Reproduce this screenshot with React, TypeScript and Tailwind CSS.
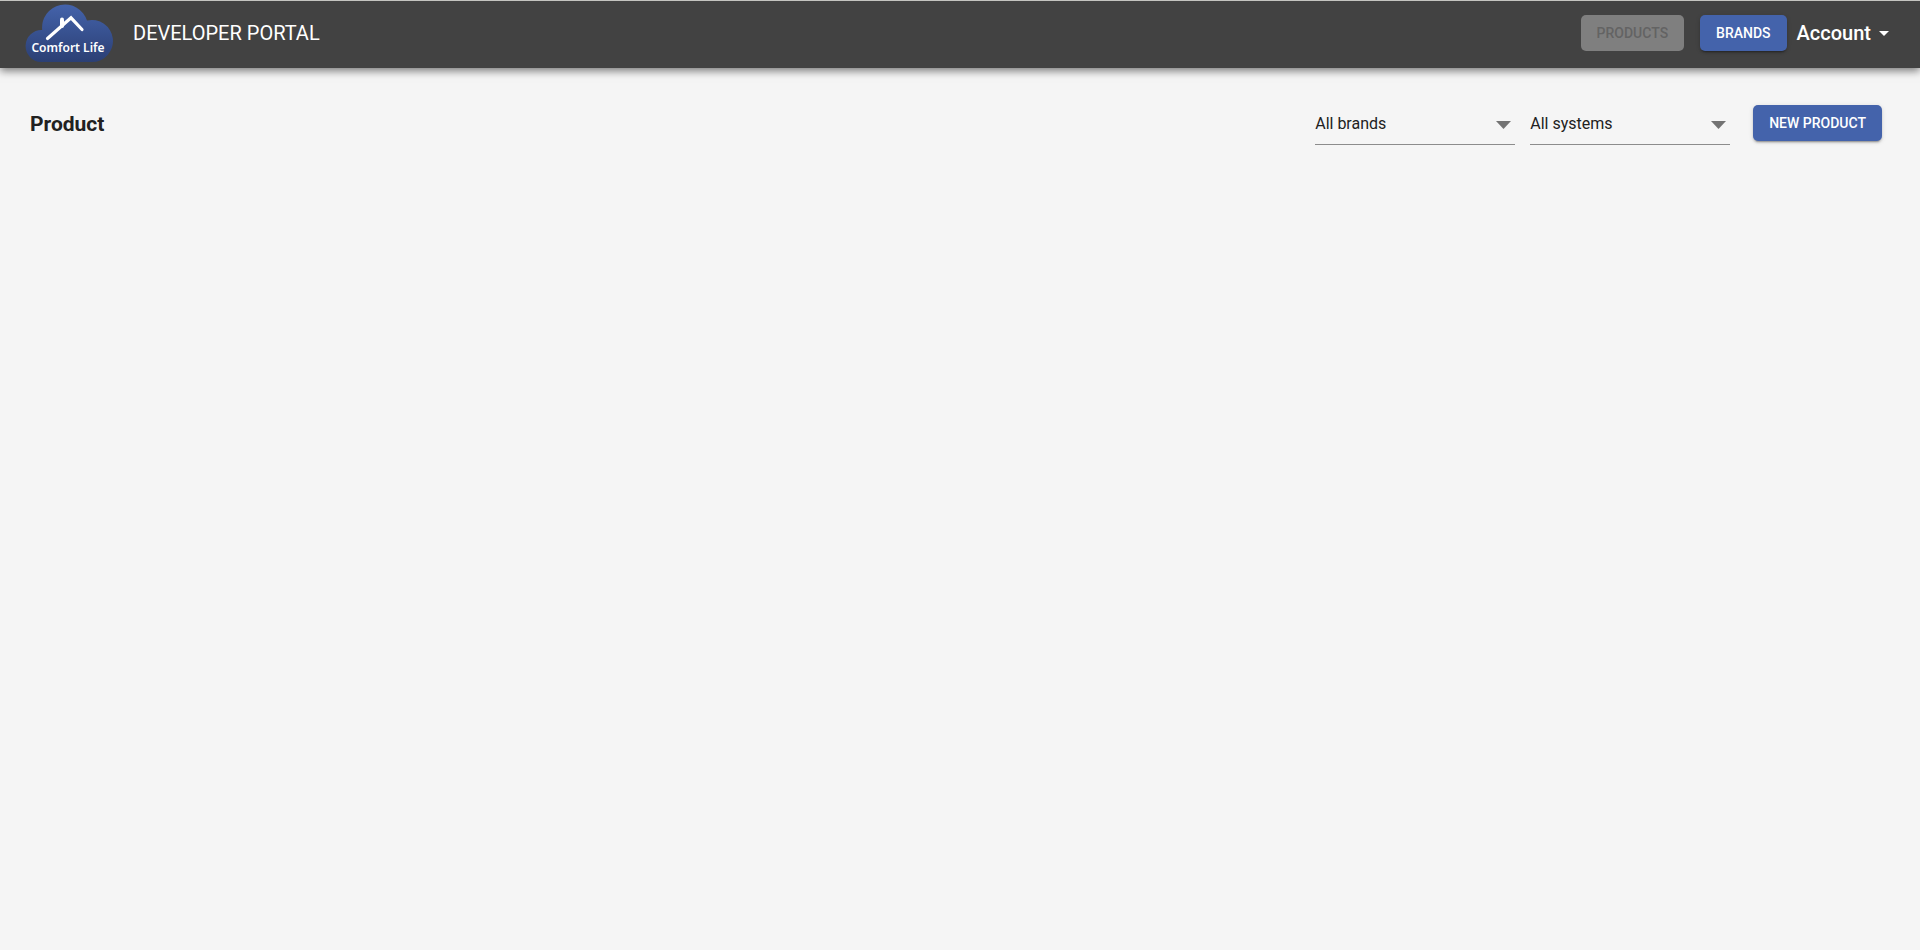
import type { ReactNode } from "react";

function Logo() {
  return (
    <svg
      width="88"
      height="58"
      viewBox="0 0 88 58"
      role="img"
      aria-label="Comfort Life"
    >
      <defs>
        <linearGradient id="cloud" x1="0" y1="0" x2="0" y2="58" gradientUnits="userSpaceOnUse">
          <stop offset="0" stopColor="#4463ab" />
          <stop offset="1" stopColor="#2b3f74" />
        </linearGradient>
      </defs>
      <path
        d="M16 58A16 16 0 1 1 17.2 26A23 23 0 0 1 62 16.6A21 21 0 1 1 67 58Z"
        fill="url(#cloud)"
      />
      <path
        d="M22.5 34.5L46 13.8L57 25.5"
        fill="none"
        stroke="#fff"
        strokeWidth="3.2"
        strokeLinecap="round"
      />
      <path d="M37 15.5V22" fill="none" stroke="#fff" strokeWidth="4" strokeLinecap="round" />
      <text
        x="43"
        y="48"
        textAnchor="middle"
        className="fill-white font-['Noto_Sans',sans-serif] text-[12px] font-semibold"
      >
        Comfort Life
      </text>
    </svg>
  );
}

function Button({ children, disabled = false }: { children: ReactNode; disabled?: boolean }) {
  return (
    <button
      type="button"
      disabled={disabled}
      className="h-9 rounded-[5px] bg-[#4463ab] px-4 text-sm font-medium whitespace-nowrap text-white shadow-[0_3px_1px_-2px_rgba(0,0,0,0.2),0_2px_2px_0_rgba(0,0,0,0.14),0_1px_5px_0_rgba(0,0,0,0.12)] disabled:bg-[#7f7f7f] disabled:text-[#636363] disabled:shadow-none"
    >
      {children}
    </button>
  );
}

function Filter({ label, option }: { label: string; option: string }) {
  return (
    <div className="relative w-50">
      <select
        aria-label={label}
        className="block h-11 w-full appearance-none border-b border-[#8c8c8c] bg-transparent pt-0.5 text-base text-[#212121] outline-none"
      >
        <option>{option}</option>
      </select>
      <svg
        className="pointer-events-none absolute top-5 right-1"
        width="15"
        height="8"
        viewBox="0 0 15 8"
        aria-hidden="true"
      >
        <path d="M0 0H15L7.5 8Z" fill="#737373" />
      </svg>
    </div>
  );
}

export default function App() {
  return (
    <div className="min-h-screen bg-[#f5f5f5] font-[Roboto,sans-serif]">
      <header className="flex items-center border-t border-[#c4c4c0] bg-[#424242] pt-[3px] pr-[31px] pb-1.5 pl-[25px] text-white shadow-[0_3px_8px_0_rgba(0,0,0,0.5)]">
        <Logo />
        <span className="ml-5 text-xl">DEVELOPER PORTAL</span>
        <nav className="ml-auto flex items-center">
          <div className="flex gap-4">
            <Button disabled>PRODUCTS</Button>
            <Button>BRANDS</Button>
          </div>
          <button type="button" className="ml-2.5 flex items-center gap-2 text-xl font-medium">
            Account
            <svg width="10" height="5" viewBox="0 0 10 5" aria-hidden="true">
              <path d="M0 0H10L5 5Z" fill="currentColor" />
            </svg>
          </button>
        </nav>
      </header>
      <main className="flex items-start justify-between pt-[33px] pr-[38px] pl-[30px]">
        <h1 className="pt-2 text-[21px] leading-[30px] font-bold text-[#212121]">Product</h1>
        <div className="flex items-start">
          <div className="flex gap-[15px]">
            <Filter label="Brand" option="All brands" />
            <Filter label="System" option="All systems" />
          </div>
          <div className="ml-[23px] pt-1">
            <Button>NEW PRODUCT</Button>
          </div>
        </div>
      </main>
    </div>
  );
}
